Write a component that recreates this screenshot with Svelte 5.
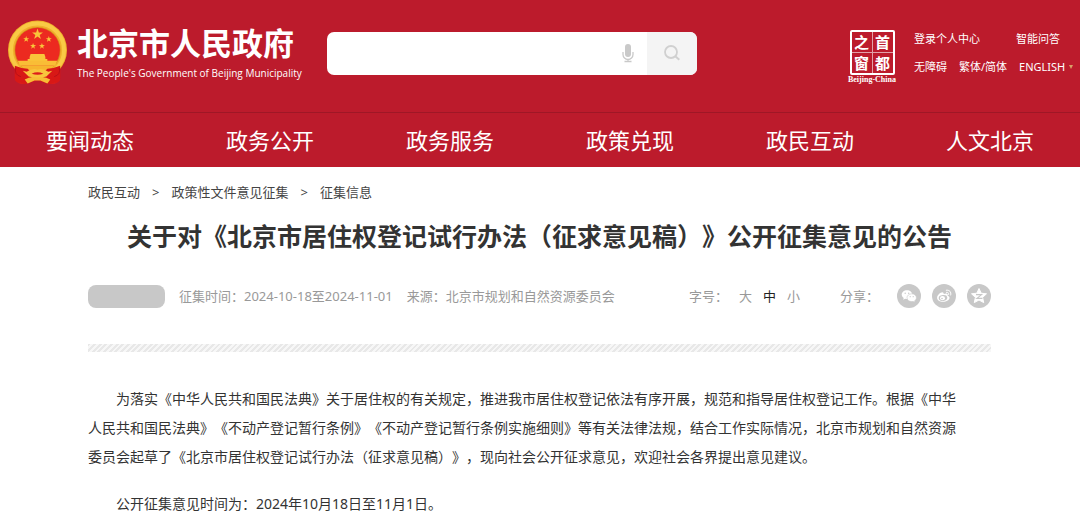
<script>
  const nav = ['要闻动态', '政务公开', '政务服务', '政策兑现', '政民互动', '人文北京'];
  const sizes = ['大', '中', '小'];
  let size = $state('中');
  let query = $state('');
</script>

{#snippet star(x, y, r)}
  <polygon
    points="0,-10 2.4,-3.2 9.5,-3.1 3.8,1.2 5.9,8.1 0,4 -5.9,8.1 -3.8,1.2 -9.5,-3.1 -2.4,-3.2"
    transform="translate({x} {y}) scale({r / 10})"
    fill="#f9c53a"
  />
{/snippet}

<header>
  <div class="top">
    <a class="brand" href="#home">
      <svg class="emblem" viewBox="0 0 62 66" aria-hidden="true">
        <path d="M8 44 L8 60 Q12 66 19 64 L31 61 L43 64 Q50 66 54 60 L54 44Z" fill="#dd1d1b" />
        <circle cx="31" cy="30" r="30" fill="#f0b02c" />
        <circle cx="31" cy="30" r="27" fill="none" stroke="#f9ca45" stroke-width="4" />
        <circle cx="31" cy="30" r="23.5" fill="#d98b1c" />
        <circle cx="31" cy="30" r="22.7" fill="#ec2a20" />
        {@render star(31, 14, 5.8)}
        {@render star(19.5, 19, 3.2)}
        {@render star(42.5, 19, 3.2)}
        {@render star(26.5, 26, 3.2)}
        {@render star(35.5, 26, 3.2)}
        <path d="M24 34h14l1 3h-16zM23 37h16v2h-16zM21 39h20v2.500h-20z" fill="#f9c53a" />
        <path d="M11 41h40l-2 5H13z" fill="#f9bd36" />
        <path d="M14 46h34l-4 4q-13 6-26 0z" fill="#f6b52f" />
        <path d="M8 46q7 3 13 3l5 5-2 9q-6 3-10 0-6 1-6-5z" fill="#d81816" />
        <path d="M54 46q-7 3-13 3l-5 5 2 9q6 3 10 0 6 1 6-5z" fill="#d81816" />
        <path d="M20 52q6-4 11-2q5-2 11 2l4-1-6 6q-9 3-18 0l-6-6z" fill="#f8c53d" />
        <path d="M25 54q6-3 12 0-6 2-12 0z" fill="#dd1d1b" />
        <path d="M18 60q6-4 13-2q7-2 13 2l-3 4-7-3h-6l-7 3z" fill="#f6bd35" />
        <path d="M9 48q-2 7 5 9M53 48q2 7-5 9" fill="none" stroke="#b80f17" stroke-width="1" />
      </svg>
      <span class="names">
        <strong>北京市人民政府</strong>
        <span class="en">The People's Government of Beijing Municipality</span>
      </span>
    </a>

    <form class="search" onsubmit={(e) => e.preventDefault()}>
      <input type="text" aria-label="搜索" bind:value={query} />
      <button class="mic" type="button" aria-label="语音输入">
        <svg width="12" height="20" viewBox="0 0 12 20" aria-hidden="true">
          <rect x="3" y="1" width="6" height="13" rx="3" fill="#c9c9c9" />
          <path d="M1 9v2.500a5 5 0 0 0 10 0V9M6 16.500v2M2.500 18.500h7" fill="none" stroke="#c9c9c9" stroke-width="1.3" />
        </svg>
      </button>
      <button class="go" type="submit" aria-label="搜索">
        <svg width="16" height="16" viewBox="0 0 16 16" aria-hidden="true">
          <circle cx="7" cy="7" r="6" fill="none" stroke="#d0d0d0" stroke-width="1.8" />
          <path d="M11.300 11.300l4 3.500" stroke="#d0d0d0" stroke-width="2" />
        </svg>
      </button>
    </form>

    <a class="seal" href="#capital">
      <span class="grid"><b>之</b><b>首</b><b>窗</b><b>都</b></span>
      <span class="caption">Beijing-China</span>
    </a>

    <div class="links">
      <div><a href="#login">登录个人中心</a><a class="ask" href="#ask">智能问答</a></div>
      <div>
        <a href="#access">无障碍</a>
        <a href="#lang">繁体/简体</a>
        <button type="button">ENGLISH<i></i></button>
      </div>
    </div>
  </div>

  <nav>
    {#each nav as item}<a href="#{item}">{item}</a>{/each}
  </nav>
</header>

<main>
  <div class="crumbs">
    <a href="#interact">政民互动</a><span>&gt;</span><a href="#policy">政策性文件意见征集</a><span>&gt;</span><a href="#info">征集信息</a>
  </div>

  <h1>关于对《北京市居住权登记试行办法（征求意见稿）》公开征集意见的公告</h1>

  <div class="meta">
    <span class="tag"></span>
    <span>征集时间：2024-10-18至2024-11-01</span>
    <span>来源：北京市规划和自然资源委员会</span>
    <div class="sizes">
      <span>字号：</span>
      {#each sizes as s}
        <button type="button" class:on={size === s} onclick={() => (size = s)}>{s}</button>
      {/each}
    </div>
    <div class="share">
      <span>分享：</span>
      <a href="#wechat" aria-label="微信">
        <svg viewBox="0 0 24 24" aria-hidden="true">
          <circle cx="12" cy="12" r="12" fill="#c8c8c8" />
          <path d="M10 6.200c-3 0-5.300 2-5.300 4.400 0 1.400.8 2.600 2 3.400l-.5 1.700 2-1c.6.2 1.200.2 1.800.2 3 0 5.300-2 5.300-4.300S13 6.200 10 6.200z" fill="#fff" />
          <path d="M14.700 9.800c-2.600 0-4.700 1.700-4.700 3.900s2.100 3.900 4.700 3.900c.6 0 1.100-.1 1.600-.2l1.700.9-.4-1.500c1.100-.7 1.800-1.800 1.800-3.100 0-2.200-2.100-3.900-4.700-3.900z" fill="#fff" stroke="#c8c8c8" stroke-width=".6" />
          <g fill="#c8c8c8"><circle cx="8.200" cy="9.300" r=".7" /><circle cx="11.700" cy="9.300" r=".7" /><circle cx="13.200" cy="12.700" r=".6" /><circle cx="16.200" cy="12.700" r=".6" /></g>
        </svg>
      </a>
      <a href="#weibo" aria-label="微博">
        <svg viewBox="0 0 24 24" aria-hidden="true">
          <circle cx="12" cy="12" r="12" fill="#c8c8c8" />
          <path d="M10.800 8.400c-1.700-.7-5.700 2.600-5.700 5.500 0 2.300 2.700 3.900 5.800 3.900 3.900 0 6.600-2 6.600-4 0-1.300-1-1.800-1.900-2.100.4-1.200.1-2.200-1.200-2.300-.8-.1-1.800.3-2.800.7.2-.7.2-1.400-.8-1.700z" fill="#fff" />
          <ellipse cx="11" cy="14" rx="4.300" ry="2.900" fill="#c8c8c8" transform="rotate(-6 11 14)" />
          <ellipse cx="10.500" cy="14.200" rx="2.500" ry="2.100" fill="#fff" />
          <circle cx="10" cy="14.500" r=".8" fill="#c8c8c8" />
          <path d="M14.300 6.200c3-.6 5.300 1.700 4.400 4.800M14.500 8.300c1.500-.3 2.600.8 2.200 2.200" fill="none" stroke="#fff" stroke-width="1" stroke-linecap="round" />
        </svg>
      </a>
      <a href="#qzone" aria-label="QQ空间">
        <svg viewBox="0 0 24 24" aria-hidden="true">
          <circle cx="12" cy="12" r="12" fill="#c8c8c8" />
          <path d="M12 4.500l2.200 4.700 5.300.6-3.900 3.600 1.100 5.200L12 16l-4.700 2.600 1.100-5.200-3.900-3.600 5.300-.6z" fill="#fff" stroke="#fff" stroke-linejoin="round" />
          <path d="M9 10.600h5.600l-4.700 3.800h5.500" fill="none" stroke="#c8c8c8" stroke-width="1.100" />
        </svg>
      </a>
    </div>
  </div>

  <hr />

  <article>
    <p>为落实《中华人民共和国民法典》关于居住权的有关规定，推进我市居住权登记依法有序开展，规范和指导居住权登记工作。根据《中华人民共和国民法典》《不动产登记暂行条例》《不动产登记暂行条例实施细则》等有关法律法规，结合工作实际情况，北京市规划和自然资源委员会起草了《北京市居住权登记试行办法（征求意见稿）》，现向社会公开征求意见，欢迎社会各界提出意见建议。</p>
    <p>公开征集意见时间为：2024年10月18日至11月1日。</p>
  </article>
</main>

<style>
  :global(body) {
    margin: 0;
    background: #fff;
    color: #333;
    font-family: 'Noto Sans', 'Noto Sans CJK SC', sans-serif;
    text-spacing-trim: space-all;
  }
  a { color: inherit; text-decoration: none; }
  button { padding: 0; border: 0; background: none; color: inherit; font: inherit; cursor: pointer; }
  svg { display: block; }

  header { background: #bc1b2c; color: #fff; }
  .top {
    display: flex;
    align-items: center;
    box-sizing: border-box;
    height: 113px;
    padding: 0 6px 6px 7px;
    border-bottom: 1px solid #9f1726;
  }
  .brand { display: flex; align-items: center; gap: 9px; flex: none; width: 320px; }
  .emblem { width: 61px; height: 66px; }
  .names { display: flex; flex-direction: column; gap: 4px; white-space: nowrap; }
  .names strong { font-size: 31px; line-height: 36px; }
  .en { font-size: 10px; line-height: 16px; font-weight: 500; font-family: 'Open Sans', sans-serif; }

  .search {
    display: flex;
    flex: 0 1 370px;
    height: 43px;
    border-radius: 7px;
    overflow: hidden;
    background: #fff;
  }
  .search input { flex: 1; min-width: 0; border: 0; padding: 0 12px; font: inherit; font-size: 14px; outline: 0; background: none; }
  .mic { display: grid; place-items: center; width: 38px; }
  .go { display: grid; place-items: center; width: 50px; background: #f4f4f4; }

  .seal { display: flex; flex-direction: column; align-items: center; width: 50px; margin: 8px 0 0 auto; }
  .grid {
    display: grid;
    grid-template-columns: 1fr 1fr;
    gap: 1px;
    width: 41px;
    border: 2px solid #fff;
    border-radius: 2px;
    background: #e2a0a8;
  }
  .grid b {
    background: #bc1b2c;
    text-align: center;
    font-size: 15px;
    line-height: 20px;
    font-family: 'Noto Sans CJK SC', sans-serif;
  }
  .caption { font: bold 8px/10px 'Liberation Serif', serif; white-space: nowrap; }

  .links { display: flex; flex-direction: column; gap: 10px; margin-left: 17px; font-size: 11px; line-height: 18px; }
  .links div { display: flex; width: 160px; white-space: nowrap; gap: 12px; }
  .links .ask { margin-left: 24px; }
  .links button { display: flex; align-items: center; gap: 4px; }
  .links i { border: 2px solid transparent; border-top: 4px solid #d9a066; border-bottom: 0; }

  nav { display: grid; grid-template-columns: repeat(6, 1fr); height: 54px; align-items: center; }
  nav a { text-align: center; font-size: 22px; line-height: 32px; }

  main { padding: 15px 89px 0 88px; }
  .crumbs { display: flex; gap: 12px; font-size: 13px; line-height: 20px; color: #444; }
  h1 { margin: 15px 0 0; text-align: center; font-size: 25px; line-height: 38px; font-weight: 700; white-space: nowrap; }

  .meta { display: flex; align-items: center; gap: 14px; margin-top: 29px; font-size: 13px; line-height: 24px; color: #999; white-space: nowrap; }
  .tag { width: 77px; height: 23px; border-radius: 8px; background: #c8c8c8; }
  .sizes { display: flex; gap: 11px; margin-left: auto; }
  .sizes button.on { color: #222; }
  .share { display: flex; gap: 11px; margin-left: 26px; }
  .share span { margin-right: 7px; }
  .share svg { width: 24px; height: 24px; }

  hr {
    height: 8px;
    margin: 36px 0 0;
    border: 0;
    background: repeating-linear-gradient(135deg, #e8e8e8 0 2px, #f7f7f7 2px 4px);
  }

  article { padding: 32px 24px 16px 0; font-size: 14px; line-height: 29px; }
  p { margin: 0 0 18px; text-indent: 2em; }
</style>
